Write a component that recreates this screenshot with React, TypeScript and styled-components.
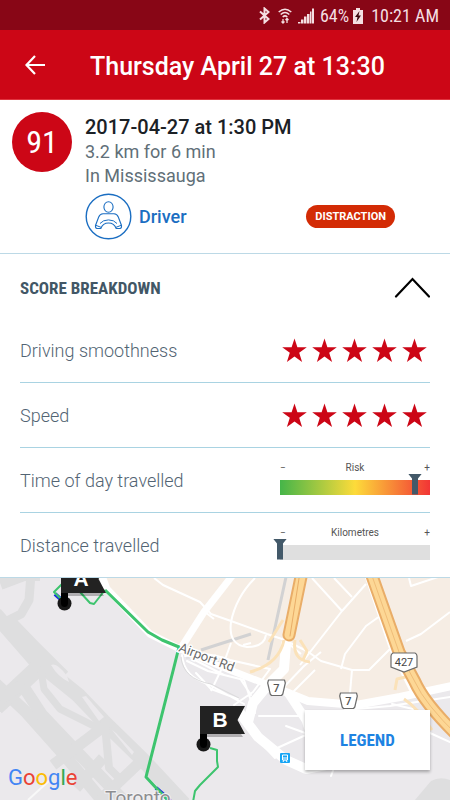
import React, { useState } from "react";
import styled, { createGlobalStyle } from "styled-components";

const GlobalStyle = createGlobalStyle`
  *, *::before, *::after { box-sizing: border-box; }
  body { margin: 0; background: #fff; }
  body, button, input { font-family: Roboto, "Liberation Sans", sans-serif; }
  h1, h2, p, ul { margin: 0; padding: 0; font-weight: inherit; }
`;

const condensed = `"Roboto Condensed", Roboto, "Liberation Sans", sans-serif`;

const Screen = styled.div`
  display: flex;
  flex-direction: column;
  min-height: 100vh;
  background: #fff;
  color: #616f78;
`;

const StatusBar = styled.div`
  display: flex;
  align-items: center;
  justify-content: flex-end;
  height: 30px;
  padding: 1px 11px 0;
  background: #880616;
  color: #f4dfe2;
  font-size: 18px;
  line-height: 30px;
  font-family: ${condensed};
`;

const StatusIcon = styled.svg<{ $gap: number }>`
  flex: none;
  margin-right: ${(p) => p.$gap}px;
`;

const StatusText = styled.span<{ $gap?: number }>`
  margin-right: ${(p) => p.$gap ?? 0}px;
`;

const AppBar = styled.header`
  display: flex;
  align-items: center;
  height: 70px;
  padding: 0 15px;
  background: #cc0616;
  border-bottom: 1px solid #e0343f;
  color: #fff;
`;

const BackButton = styled.button`
  display: grid;
  place-items: center;
  width: 40px;
  height: 40px;
  margin-right: 35px;
  padding: 0;
  border: 0;
  background: none;
  color: inherit;
`;

const Title = styled.h1`
  padding-top: 4px;
  font-size: 25px;
  line-height: 32px;
  font-weight: 500;
  white-space: nowrap;
`;

const Summary = styled.section`
  display: flex;
  gap: 13px;
  padding: 12px 20px 13px 12px;
  border-bottom: 1px solid #bcd9e6;
`;

const Score = styled.div`
  display: grid;
  place-items: center;
  flex: none;
  width: 60px;
  height: 60px;
  border-radius: 50%;
  background: #cc0616;
  color: #fff;
  font: 400 32px/60px ${condensed};
`;

const TripInfo = styled.div`
  flex: 1;
  padding-top: 3px;
  font-size: 18px;
  line-height: 24px;
`;

const TripDate = styled.h2`
  color: #1b2126;
  font-size: 20px;
  font-weight: 500;
  line-height: 25px;
`;

const TripFooter = styled.div`
  display: flex;
  align-items: center;
  justify-content: space-between;
  margin-top: 5px;
  padding-right: 35px;
`;

const Role = styled.div`
  display: flex;
  align-items: center;
  gap: 7px;
  color: #1b6ec2;
  font-weight: 500;
`;

const Tag = styled.span`
  padding: 0 9px;
  border-radius: 12px;
  background: #d32b05;
  color: #fff;
  font-size: 11px;
  font-weight: 700;
  line-height: 23px;
`;

const BreakdownToggle = styled.button`
  display: flex;
  align-items: center;
  justify-content: space-between;
  height: 64px;
  padding: 4px 20px 0;
  border: 0;
  background: none;
  color: #425766;
  font: 700 17px/24px ${condensed};
`;

const Rows = styled.ul`
  list-style: none;
  border-bottom: 1px solid #bcd9e6;
`;

const Row = styled.li`
  display: flex;
  align-items: center;
  justify-content: space-between;
  height: 65px;
  margin: 0 20px;
  border-bottom: 1px solid #a9d3e2;
  color: #526473;
  font-size: 18px;
  font-weight: 300;
  &:last-child { border-bottom: 0; height: 64px; }
`;

const Stars = styled.div`
  display: flex;
  gap: 5px;
  margin-right: 3px;
`;

const Gauge = styled.div`
  width: 150px;
  padding-bottom: 4px;
`;

const Scale = styled.div`
  display: flex;
  justify-content: space-between;
  color: #555;
  font-size: 10px;
  font-weight: 400;
  line-height: 12px;
`;

const GaugeInput = styled.input<{ $track: string }>`
  appearance: none;
  display: block;
  width: calc(100% + 14px);
  height: 21px;
  margin: 0 -7px;
  background: ${(p) => p.$track} 7px 6px / calc(100% - 14px) 15px no-repeat;
  pointer-events: none;
  &::-webkit-slider-thumb {
    appearance: none;
    width: 14px;
    height: 21px;
    background: #435969;
    clip-path: polygon(0 0, 100% 0, 10px 5px, 10px 100%, 4px 100%, 4px 5px);
  }
`;

const MapArea = styled.section`
  position: relative;
  flex: 1 0 222px;
  overflow: hidden;
  background: #ebe9ec;
`;

const MapDrawing = styled.svg`
  position: absolute;
  inset: 0;
  width: 100%;
  height: 100%;
`;

const Legend = styled.button`
  position: absolute;
  right: 20px;
  bottom: 30px;
  width: 125px;
  height: 60px;
  border: 0;
  background: #fff;
  box-shadow: 0 2px 3px rgba(0, 0, 0, 0.3);
  color: #1e83e2;
  font: 700 17px/24px ${condensed};
`;

const Attribution = styled.div`
  position: absolute;
  left: 8px;
  bottom: 8px;
  font: 400 22px/28px Roboto, "Liberation Sans", sans-serif;
`;

const Letter = styled.span<{ $color: string }>`
  color: ${(p) => p.$color};
`;

const logo: [string, string][] = [
  ["G", "#4285f4"], ["o", "#ea4335"], ["o", "#fbbc05"],
  ["g", "#4285f4"], ["l", "#34a853"], ["e", "#ea4335"],
];

function StarRating({ label }: { label: string }) {
  return (
    <Stars role="img" aria-label={`${label}: 5 of 5 stars`}>
      {[0, 1, 2, 3, 4].map((n) => (
        <svg key={n} width="25" height="25" viewBox="0 0 25 25" fill="#cc0616">
          <path d="M12.5 0.5 15.4 9.2H24.8L17.2 14.7 20.1 24 12.5 18.4 4.9 24 7.8 14.7 0.2 9.2H9.6Z" />
        </svg>
      ))}
    </Stars>
  );
}

function ScaleGauge({ label, caption, value, track }: { label: string; caption: string; value: number; track: string }) {
  return (
    <Gauge>
      <Scale>
        <span>−</span>
        <span>{caption}</span>
        <span>+</span>
      </Scale>
      <GaugeInput type="range" aria-label={label} min={0} max={100} value={value} readOnly $track={track} />
    </Gauge>
  );
}

function DriverIcon() {
  return (
    <svg width="47" height="47" viewBox="0 0 47 47" fill="none" stroke="#1b6ec2" aria-hidden="true">
      <circle cx="23.5" cy="23.5" r="22.3" strokeWidth="1.4" />
      <ellipse cx="23.5" cy="14" rx="4.600" ry="5.300" strokeWidth="1.100" />
      <path d="M18 20.800H29Q32 21 33.300 24L36.500 32.500Q36.800 35.200 35 35.500H31.200Q29.200 30 23.500 30Q17.800 30 15.800 35.500H12Q10.200 35.200 10.500 32.500L13.700 24Q15 21 18 20.800Z" strokeWidth="1.100" />
      <path d="M15 30.500Q18 26.900 23.500 26.900Q29 26.900 32 30.500M10.500 32.200 16 34.300M36.500 32.200 31 34.300" strokeWidth="1" />
    </svg>
  );
}

function Flag({ x, y, letter }: { x: number; y: number; letter: string }) {
  return (
    <g transform={`translate(${x} ${y})`}>
      <path d="M7 28H41L43 31H7Z" fill="#000" opacity=".25" />
      <circle cx="3.5" cy="38.5" r="7" fill="#181818" />
      <path d="M0 0H45L37.5 14 45 28H7V38.5A3.5 3.5 0 0 1 0 38.5Z" fill="#222" />
      <path d="M0 28H7V38.5A3.5 3.5 0 0 1 0 38.5Z" fill="#000" />
      <text x="20" y="21" textAnchor="middle" fill="#fff" fontFamily="'Liberation Sans', sans-serif" fontWeight="700" fontSize="21">{letter}</text>
    </g>
  );
}

function RouteSeven({ x, y }: { x: number; y: number }) {
  return (
    <g transform={`translate(${x} ${y})`}>
      <path d="M1.5 1H17.5L18.3 4 15.800 15 14.5 16.5H4.5L3.200 15 .7 4Z" fill="#fff" stroke="#6b6b6b" strokeWidth="1.2" strokeLinejoin="round" />
      <text x="9.5" y="12.5" textAnchor="middle" fontFamily="Roboto, sans-serif" fontSize="11" fontWeight="500" fill="#555">7</text>
    </g>
  );
}

function TripMap() {
  return (
    <MapDrawing viewBox="0 0 450 222" preserveAspectRatio="xMidYMin slice" role="img" aria-label="Trip route map">
      <rect width="450" height="222" fill="#ebe9ec" />
      <path d="M98 0H450V106L360 124 310 122 265 104 178 70 150 56Z" fill="#f6ede4" />

      {/* Airport apron and runways */}
      <g fill="none" stroke="#dededf" strokeLinejoin="round">
        <path d="M0 5 24 -4H40" strokeWidth="14" />
        <path d="M31 -4 29 22 21 36 5 44" strokeWidth="9" />
        <path d="M-5 36 36 83 78 117 103 143 142 181 184 226" strokeWidth="15" />
        <path d="M8 39 35 67 65 97" strokeWidth="9" />
        <path d="M-5 105 25 133 66 179 105 226" strokeWidth="12" />
        <path d="M-4 129 40 88" strokeWidth="17" />
        <path d="M23 108 42 137 78 175 125 224" strokeWidth="12" />
        <path d="M41 92 44 111 60 131 98 150" strokeWidth="7" />
        <path d="M0 122 24 105M53 187 111 143M100 222 141 183M76 210 103 180" strokeWidth="11" />
        <path d="M105 147 109 190 124 205" strokeWidth="8" />
      </g>
      <path d="M51 87Q57 84 67 98L69 104Q58 99 51 87M82 119 86 118 104 139 99 143ZM112 152 116 155 134 174 132 177Z" fill="#ebe9ec" />
      <path d="M415 222 431 203Q440 198 450 202V222Z" fill="#dededf" />
      <path d="M28 222 50 202" stroke="#f8f8f8" strokeWidth="2" />

      {/* Rail lines */}
      <path d="M286 -1 276 45 268 82M201 72 251 56" fill="none" stroke="#d2d2d3" strokeWidth="3" />

      {/* Local streets */}
      <g fill="none" stroke="#fff" strokeWidth="2" strokeLinejoin="round">
        <path d="M154 0 163 7 200 24 211 36 231 43 267 56 282 61 307 73 321 83 352 92H369L390 71" />
        <path d="M255 0Q236 19 231 44Q228 67 247 69Q264 69 266 57M205 34 214 41M243 67 251 65M231 65 222 90 211 113" />
        <path d="M312 0 342 33 366 6M334 0 352 19M300 87 342 33M380 38 366 48 345 76 341 91M406 63 421 56 450 34M409 0 411 8 450 -5" />
        <path d="M352 92 350 115M282 111 304 88 321 74M283 61 301 76M293 114 315 92" />
        <path d="M366 -2 391 72 414 119" strokeWidth="3" />
      </g>

      {/* Arterials and terminal roads */}
      <g fill="none" stroke="#fff" strokeLinejoin="round" strokeLinecap="round">
        <path d="M101 -5 107 11 150 56 178 70 230 92 271 108" strokeWidth="7" />
        <path d="M232 -2 204 34 181 70" strokeWidth="7" />
        <path d="M271 108 308 123 356 127 400 119 452 108" strokeWidth="8" />
        <path d="M286 66 284 91 267 108 253 125 248 144" strokeWidth="10" />
        <path d="M240 135 258 159 286 182 306 191 336 185" strokeWidth="10" />
        <path d="M289 116 306 142 311 158" strokeWidth="9" />
        <path d="M182 77Q184 99 208 106L244 126M185 78Q207 73 230 82L270 91 253 114 234 127M187 83 208 93 244 102 255 135M191 80 224 97M196 95 211 111 238 121M248 151 275 180M275 171 308 156 286 148M259 138H310M331 198 334 190 340 183M430 155 450 164M345 132 390 128 450 119M392 126 413 131M241 102 251 117M259 118 282 104" strokeWidth="2" />
      </g>
      <path d="M181 79Q183 101 211 106L239 120M186 80Q205 77 234 89" fill="none" stroke="#dadadb" strokeWidth="1" />

      {/* Highway ramps */}
      <g fill="none" stroke="#fbe2b9" strokeWidth="3" strokeLinejoin="round">
        <path d="M283 42 269 64M284 62Q279 86 250 94M295 62Q292 82 310 84M300 62 307 73 303 82M410 98 397 101 395 112M404 121Q418 130 432 152" />
      </g>

      {/* Highways */}
      <g fill="none" strokeLinecap="round">
        <path d="M302 -6 289 57" stroke="#e9ad68" strokeWidth="13" />
        <path d="M302 -6 289 57" stroke="#fdd795" strokeWidth="9" />
        <path d="M300 -6 290 58" stroke="#e9ad68" strokeWidth="1" />
        <path d="M371 -5 399 74 415 104Q425 126 458 158" stroke="#e9ad68" strokeWidth="13" />
        <path d="M371 -5 399 74 415 104Q425 126 458 158" stroke="#fdd795" strokeWidth="9" />
        <path d="M371 -5 399 74 415 104Q425 126 458 158" stroke="#efbd79" strokeWidth="1" />
      </g>

      {/* Driven route */}
      <path d="M55 16 66 26M156 210 165 218 170 223" stroke="#1b2fe0" fill="none" strokeWidth="4" />
      <g fill="none" stroke="#3dc46e" strokeWidth="3" strokeLinejoin="round">
        <path d="M63 5 54 14 62 22M80 14 90 25 94 26 105 12" strokeWidth="2" />
        <path d="M105 12 148 54 162 62 179 69 173 93 146 199 158 212 170 224" />
        <path d="M210 170 217 172V183L218 189 200 207 195 213 193 224" strokeWidth="2" />
      </g>

      <text x="178" y="73" transform="rotate(21 178 73)" fontFamily="Roboto, sans-serif" fontSize="13" fill="#6a6a6a" stroke="#fff" strokeWidth="3" paintOrder="stroke">Airport Rd</text>
      <text x="105" y="226" fontFamily="Roboto, sans-serif" fontSize="19" fill="#8d8d90" stroke="#f3f2f4" strokeWidth="2" paintOrder="stroke">Toronto</text>

      <RouteSeven x={267} y={101} />
      <RouteSeven x={339} y={114} />
      <path d="M393 75H415Q417 76 417 78V89L404 94 391 89V78Q391 76 393 75Z" fill="#fff" stroke="#6b6b6b" strokeWidth="1.2" />
      <text x="404" y="88" textAnchor="middle" fontFamily="Roboto, sans-serif" fontSize="11" fill="#444">427</text>

      <rect x="280" y="175" width="10" height="10" rx="1" fill="#16a5f5" />
      <path d="M282.500 177H287.500V182H282.500ZM282.500 180H287.500M283 184 284 182M287 184 286 182" fill="none" stroke="#fff" strokeWidth="1" />

      <Flag x={61} y={-13} letter="A" />
      <Flag x={200} y={128} letter="B" />
    </MapDrawing>
  );
}

export default function App() {
  const [open, setOpen] = useState(true);
  return (
    <Screen>
      <GlobalStyle />
      <StatusBar>
        <StatusIcon $gap={8} width="11" height="17" viewBox="0 0 11 17" fill="none" stroke="currentColor" strokeWidth="2">
          <path d="M1 4.500 9.500 12 5.500 15.500V1.500L9.500 5 1 12.500" />
        </StatusIcon>
        <StatusIcon $gap={6} width="14" height="16" viewBox="0 0 14 16" fill="none" stroke="currentColor" strokeWidth="1.500">
          <path d="M.7 4Q7-1.500 13.300 4M2.700 6.500Q7 2.600 11.300 6.500M4.700 9Q7 6.800 9.300 9" />
          <path d="M5 15V11M9 10.500V15M3.500 13.500 5 15 6.500 13.500M7.500 12 9 10.500 10.500 12" strokeWidth="1.300" />
        </StatusIcon>
        <StatusIcon $gap={6} width="16" height="16" viewBox="0 0 16 16" fill="currentColor">
          <path d="M0 14H2.500V15.500H0ZM3 11.500H5.500V15.500H3ZM6 8.500H8.500V15.500H6ZM9 6H11.500V15.500H9ZM12 3.500H13.500V15.500H12ZM14 .5H16V15.500H14Z" />
        </StatusIcon>
        <StatusText $gap={4}>64%</StatusText>
        <StatusIcon $gap={8} width="10" height="16" viewBox="0 0 10 16">
          <path d="M3 0H7V2H10V16H0V2H3Z" fill="#f4dfe2" />
          <path d="M6.500 3 2 9H4.500L3.500 14 8 7.500H5.500Z" fill="#3a0a10" />
        </StatusIcon>
        <StatusText>10:21 AM</StatusText>
      </StatusBar>

      <AppBar>
        <BackButton aria-label="Back">
          <svg width="22" height="20" viewBox="0 0 22 20" fill="none" stroke="currentColor" strokeWidth="2.200">
            <path d="M21 10H2.500M11 1 2.500 10 11 19" />
          </svg>
        </BackButton>
        <Title>Thursday April 27 at 13:30</Title>
      </AppBar>

      <Summary>
        <Score>91</Score>
        <TripInfo>
          <TripDate>2017-04-27 at 1:30 PM</TripDate>
          <p>3.2 km for 6 min</p>
          <p>In Mississauga</p>
          <TripFooter>
            <Role><DriverIcon />Driver</Role>
            <Tag>DISTRACTION</Tag>
          </TripFooter>
        </TripInfo>
      </Summary>

      <BreakdownToggle aria-expanded={open} onClick={() => setOpen(!open)}>
        <span>SCORE BREAKDOWN</span>
        <svg width="36" height="22" viewBox="0 0 36 22" fill="none" stroke="#000" strokeWidth="2.200" strokeLinecap="round">
          <path d={open ? "M2 19.500 18.500 2 35 19.500" : "M2 2 18.500 19.500 35 2"} />
        </svg>
      </BreakdownToggle>

      {open && (
        <Rows>
          <Row><span>Driving smoothness</span><StarRating label="Driving smoothness" /></Row>
          <Row><span>Speed</span><StarRating label="Speed" /></Row>
          <Row>
            <span>Time of day travelled</span>
            <ScaleGauge label="Time of day travelled" caption="Risk" value={90} track="linear-gradient(90deg, #45b549, #fddb3a 50%, #f23535)" />
          </Row>
          <Row>
            <span>Distance travelled</span>
            <ScaleGauge label="Distance travelled" caption="Kilometres" value={0} track="linear-gradient(#dfdfdf, #dfdfdf)" />
          </Row>
        </Rows>
      )}

      <MapArea>
        <TripMap />
        <Attribution aria-label="Google">
          {logo.map(([char, color], i) => <Letter key={i} $color={color}>{char}</Letter>)}
        </Attribution>
        <Legend>LEGEND</Legend>
      </MapArea>
    </Screen>
  );
}
